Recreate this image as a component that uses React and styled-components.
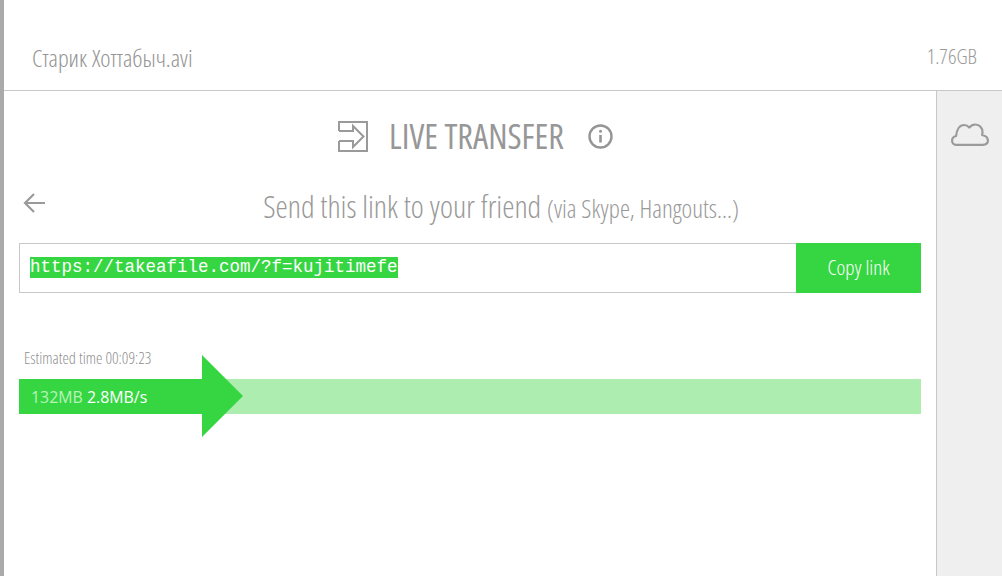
import React from 'react'
import styled, { createGlobalStyle } from 'styled-components'

const GlobalStyle = createGlobalStyle`
html, body {
  margin: 0;
  padding: 0;
  height: 100%;
  background: #fff;
}
body {
  font-family: "Open Sans", "Liberation Sans", sans-serif;
  overflow: hidden;
}
`

const Page = styled.div`
width: 1002px;
height: 576px;
box-sizing: border-box;
border-left: 4px solid #aaaaaa;
display: flex;
flex-direction: column;
color: #9a9a9a;
`

const TopBar = styled.header`
height: 91px;
box-sizing: border-box;
border-bottom: 1px solid #c8c8c8;
display: flex;
justify-content: space-between;
align-items: flex-start;
padding: 43px 25px 0 28px;
`

const Condensed = styled.span`
font-family: "Open Sans", "Liberation Sans", sans-serif;
font-stretch: 75%;
font-weight: 300;
`

const FileName = styled(Condensed)`
font-size: 24.4px;
line-height: 30px;
color: #939393;
`

const FileSize = styled(Condensed)`
font-size: 21px;
line-height: 26px;
color: #999999;
`

const Body = styled.div`
flex: 1;
display: flex;
min-height: 0;
`

const Main = styled.main`
flex: 1;
padding: 0 15px;
display: flex;
flex-direction: column;
`

const Side = styled.aside`
width: 66px;
box-sizing: border-box;
background: #efefef;
border-left: 1px solid #c8c8c8;
display: flex;
justify-content: center;
padding: 32px 0 0 1px;
`

const TitleRow = styled.div`
height: 89px;
display: flex;
align-items: center;
justify-content: center;
padding-left: 11px;
padding-top: 1px;
box-sizing: border-box;
`

const Title = styled(Condensed)`
font-size: 34.4px;
font-weight: 400;
line-height: 40px;
color: #979797;
margin: 0 24px 0 21px;
`

const SendRow = styled.div`
position: relative;
height: 63px;
display: flex;
justify-content: center;
align-items: flex-start;
padding-left: 62px;
`

const BackIcon = styled.svg`
position: absolute;
left: 4px;
top: 13px;
`

const SendText = styled(Condensed)`
font-size: 31px;
line-height: 54px;
margin-top: -1px;
color: #999999;
`

const SendNote = styled.span`
font-size: 25.300px;
`

const LinkBox = styled.div`
height: 50px;
display: flex;
`

const LinkField = styled.div`
flex: 1;
box-sizing: border-box;
border: 1px solid #c8c8c8;
border-right: none;
padding: 13px 0 0 10px;
display: flex;
align-items: flex-start;
`

const LinkText = styled.span`
font-family: "Liberation Mono", monospace;
font-size: 17.500px;
line-height: 21px;
height: 21px;
background: #36d642;
color: #fff;
`

const CopyButton = styled.button`
width: 125px;
border: none;
padding: 0 0 2px;
background: #36d642;
color: #fff;
font-family: "Open Sans", "Liberation Sans", sans-serif;
font-stretch: 75%;
font-weight: 300;
font-size: 21px;
`

const Estimate = styled(Condensed)`
display: block;
margin: 54px 0 0 5px;
font-size: 16.200px;
line-height: 22px;
color: #8f8f8f;
`

const Track = styled.div`
position: relative;
height: 35px;
margin-top: 10px;
background: #aeedb0;
`

const Fill = styled.div`
width: 183px;
height: 100%;
background: #36d642;
display: flex;
align-items: center;
padding-left: 12px;
box-sizing: border-box;
font-size: 15.900px;
white-space: pre;
`

const Head = styled.div`
position: absolute;
left: 183px;
top: -24px;
width: 0;
height: 0;
border-style: solid;
border-width: 41px 0 41px 41px;
border-color: transparent transparent transparent #36d642;
`

const Done = styled.span`
color: #b9f3bc;
`

const Rate = styled.span`
color: #fff;
`

export default function App() {
  return (
    <Page>
      <GlobalStyle />
      <TopBar>
        <FileName>Старик Хоттабыч.avi</FileName>
        <FileSize>1.76GB</FileSize>
      </TopBar>
      <Body>
        <Main>
          <TitleRow>
            <svg width="30" height="31" viewBox="0 0 30 31" fill="none" stroke="#9a9a9a" strokeWidth="2">
              <path d="M1 10V1h28v29H1V20" />
              <path d="M1 10h14V5l10.500 10.500L15 26v-6H1" />
            </svg>
            <Title>LIVE TRANSFER</Title>
            <svg width="25" height="25" viewBox="0 0 25 25" fill="none" stroke="#959595">
              <circle cx="12.500" cy="12.500" r="11" strokeWidth="2.400" />
              <path d="M12.500 11v7.500" strokeWidth="2.600" />
              <circle cx="12.500" cy="7.300" r="1.500" fill="#959595" stroke="none" />
            </svg>
          </TitleRow>
          <SendRow>
            <BackIcon width="22" height="20" viewBox="0 0 22 20" fill="none" stroke="#9a9a9a" strokeWidth="2.200">
              <path d="M22 10H3M11 1L2 10l9 9" />
            </BackIcon>
            <SendText>Send this link to your friend <SendNote>(via Skype, Hangouts...)</SendNote></SendText>
          </SendRow>
          <LinkBox>
            <LinkField>
              <LinkText>https://takeafile.com/?f=kujitimefe</LinkText>
            </LinkField>
            <CopyButton>Copy link</CopyButton>
          </LinkBox>
          <Estimate>Estimated time 00:09:23</Estimate>
          <Track>
            <Fill><Done>132MB </Done><Rate>2.8MB/s</Rate></Fill>
            <Head />
          </Track>
        </Main>
        <Side>
          <svg width="38" height="23" viewBox="0 0 38 23" fill="none" stroke="#9a9a9a" strokeWidth="2.200" strokeLinejoin="round">
            <path d="M5 21.800C2.500 21.800 1.100 19.700 1.100 17.500c0-2.300 1.600-4 4-4.500C5.800 6 9 2 13 2c2.200 0 4 .9 5.300 2.500C19.800 2.600 22 1.500 24.500 1.500c4 0 7 3.300 7 7.500 0 1-.1 2-.4 3 3 .6 5.800 2.600 5.800 5.600 0 2.700-2 4.200-5 4.200z" />
          </svg>
        </Side>
      </Body>
    </Page>
  )
}
